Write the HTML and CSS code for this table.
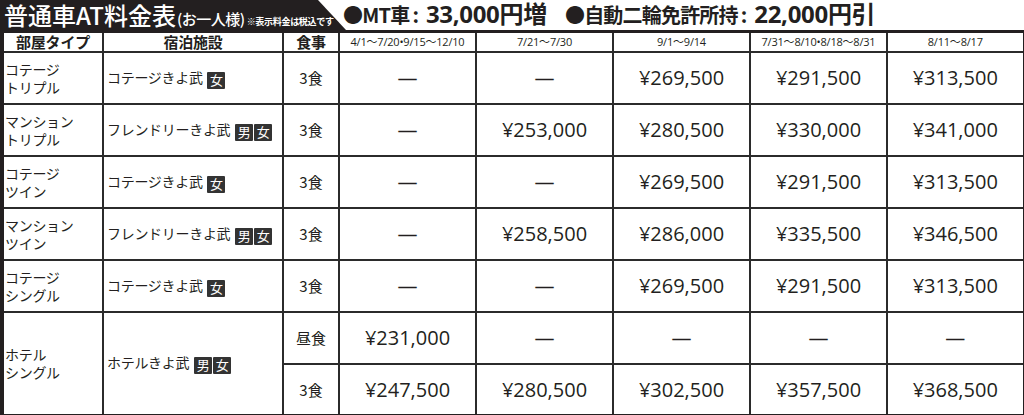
FILE: index.html
```html
<!DOCTYPE html>
<html lang="ja">
<head>
<meta charset="utf-8">
<link rel="stylesheet" href="styles.css">
</head>
<body>
<div class="page">
  <div class="titlebar">
    <div class="tab">
      <span class="t1">普通車AT料金表</span><span class="t2">(お一人様)</span><span class="t3">※表示料金は税込です</span>
    </div>
    <div class="notes">
      <span class="n1">●MT車</span><span class="n2">:</span><span class="n3">33,000円増</span>
      <span class="n1 gap">●自動二輪免許所持</span><span class="n2">:</span><span class="n3">22,000円引</span>
    </div>
  </div>
  <table class="price">
    <colgroup>
      <col class="c-type"><col class="c-fac"><col class="c-meal">
      <col class="c-p"><col class="c-p"><col class="c-p"><col class="c-p"><col class="c-p">
    </colgroup>
    <thead>
      <tr class="head">
        <th class="hb">部屋タイプ</th><th class="hb">宿泊施設</th><th class="hb">食事</th>
        <th>4/1〜7/20•9/15〜12/10</th><th>7/21〜7/30</th><th>9/1〜9/14</th><th>7/31〜8/10•8/18〜8/31</th><th>8/11〜8/17</th>
      </tr>
    </thead>
    <tbody>
      <tr>
        <td class="type">コテージ<br>トリプル</td>
        <td class="fac">コテージきよ武 <span class="badge">女</span></td>
        <td class="meal">3食</td>
        <td class="p"><span class="dash">—</span></td><td class="p"><span class="dash">—</span></td><td class="p">¥269,500</td><td class="p">¥291,500</td><td class="p">¥313,500</td>
      </tr>
      <tr>
        <td class="type">マンション<br>トリプル</td>
        <td class="fac">フレンドリーきよ武 <span class="badge">男</span><span class="badge">女</span></td>
        <td class="meal">3食</td>
        <td class="p"><span class="dash">—</span></td><td class="p">¥253,000</td><td class="p">¥280,500</td><td class="p">¥330,000</td><td class="p">¥341,000</td>
      </tr>
      <tr>
        <td class="type">コテージ<br>ツイン</td>
        <td class="fac">コテージきよ武 <span class="badge">女</span></td>
        <td class="meal">3食</td>
        <td class="p"><span class="dash">—</span></td><td class="p"><span class="dash">—</span></td><td class="p">¥269,500</td><td class="p">¥291,500</td><td class="p">¥313,500</td>
      </tr>
      <tr>
        <td class="type">マンション<br>ツイン</td>
        <td class="fac">フレンドリーきよ武 <span class="badge">男</span><span class="badge">女</span></td>
        <td class="meal">3食</td>
        <td class="p"><span class="dash">—</span></td><td class="p">¥258,500</td><td class="p">¥286,000</td><td class="p">¥335,500</td><td class="p">¥346,500</td>
      </tr>
      <tr>
        <td class="type">コテージ<br>シングル</td>
        <td class="fac">コテージきよ武 <span class="badge">女</span></td>
        <td class="meal">3食</td>
        <td class="p"><span class="dash">—</span></td><td class="p"><span class="dash">—</span></td><td class="p">¥269,500</td><td class="p">¥291,500</td><td class="p">¥313,500</td>
      </tr>
      <tr>
        <td class="type" rowspan="2">ホテル<br>シングル</td>
        <td class="fac" rowspan="2">ホテルきよ武 <span class="badge">男</span><span class="badge">女</span></td>
        <td class="meal">昼食</td>
        <td class="p">¥231,000</td><td class="p"><span class="dash">—</span></td><td class="p"><span class="dash">—</span></td><td class="p"><span class="dash">—</span></td><td class="p"><span class="dash">—</span></td>
      </tr>
      <tr>
        <td class="meal">3食</td>
        <td class="p">¥247,500</td><td class="p">¥280,500</td><td class="p">¥302,500</td><td class="p">¥357,500</td><td class="p">¥368,500</td>
      </tr>
    </tbody>
  </table>
</div>
</body>
</html>
```

FILE: styles.css
```css
* { box-sizing: border-box; }
html, body { margin: 0; padding: 0; background: #fff; }
body {
  font-family: "Noto Sans CJK JP", sans-serif;
  color: #231f20;
}
.page { width: 1024px; height: 415px; overflow: hidden; }

.titlebar {
  display: flex;
  align-items: stretch;
  height: 30px;
}
.tab {
  flex: none;
  width: 346px;
  height: 30px;
  background: #231f20;
  color: #fff;
  clip-path: polygon(0 0, 318px 0, 346px 100%, 0 100%);
  display: flex;
  align-items: baseline;
  padding: 0 0 0 4px;
  white-space: nowrap;
  line-height: 30px;
}
.t1 { font-size: 24px; font-weight: 500; letter-spacing: 0; }
.t2 { font-size: 15px; font-weight: 500; letter-spacing: -0.5px; margin-left: 1px; }
.t3 { font-size: 9px; font-weight: 700; margin-left: 2px; letter-spacing: -0.3px; }

.notes {
  margin-left: -3px;
  white-space: nowrap;
  font-weight: 700;
  line-height: 28px;
  display: flex;
  align-items: baseline;
}
.n1 { font-size: 20px; letter-spacing: -0.8px; }
.n2 { font-size: 20px; margin: 0 7px 0 3px; }
.n3 { font-family: "Open Sans", "Noto Sans CJK JP", sans-serif; font-size: 24px; font-weight: 700; letter-spacing: -0.3px; }
.gap { margin-left: 18px; }

.price {
  width: 1021px;
  table-layout: fixed;
  border-collapse: collapse;
  border-top: 3px solid #231f20;
  border-left: 4px solid #231f20;
  border-right: 3px solid #231f20;
  border-bottom: 3px solid #231f20;
}
.c-type { width: 101px; }
.c-fac { width: 180px; }
.c-meal { width: 56px; }
.c-p { width: 137px; }

.price th, .price td {
  border: 2px solid #2b2b2b;
  padding: 0;
}
.price th {
  height: 20px;
  font-size: 11px;
  font-weight: 400;
  font-family: "Open Sans", "Noto Sans CJK JP", sans-serif;
  letter-spacing: -0.2px;
  text-align: center;
  line-height: 14px;
}
.price th.hb {
  font-family: "Noto Sans CJK JP", sans-serif;
  font-size: 15px;
  font-weight: 700;
}
.price td { height: 52px; }
.type {
  font-size: 14px;
  line-height: 18px;
  padding-left: 1px !important;
  letter-spacing: -0.3px;
}
.fac {
  font-size: 14px;
  padding-left: 3px !important;
  white-space: nowrap;
  letter-spacing: -0.3px;
}
.badge {
  display: inline-block;
  width: 18px;
  height: 17px;
  line-height: 16px;
  background: #333;
  color: #fff;
  font-size: 13px;
  text-align: center;
  vertical-align: -2px;
  margin-left: 2px;
  border-radius: 1px;
}
.badge + .badge { margin-left: 1px; }
.meal {
  font-size: 15px;
  text-align: center;
}
.p {
  text-align: center;
  font-family: "Open Sans", "Noto Sans CJK JP", sans-serif;
  font-size: 20px;
}
.dash { font-family: "Open Sans", sans-serif; font-size: 20px; }
```
